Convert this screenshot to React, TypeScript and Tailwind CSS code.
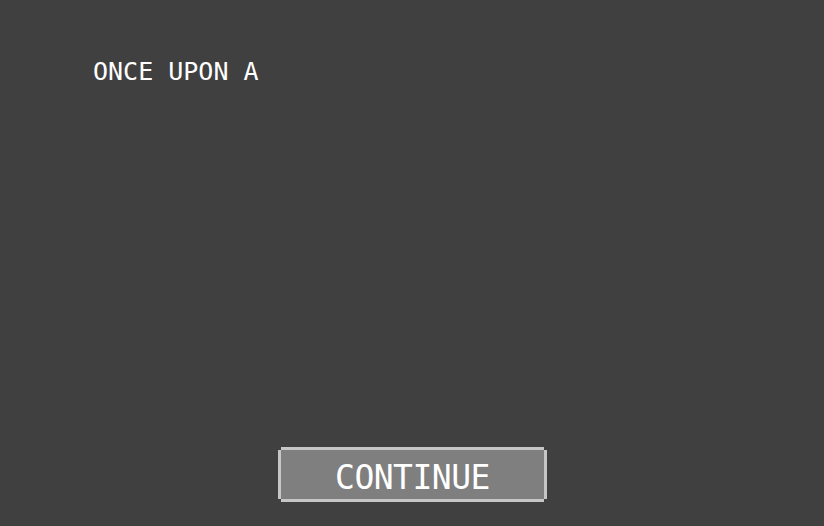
export default function App() {
  return (
    <div className="w-[824px] h-[526px] bg-[#404040] flex flex-col font-['DejaVu_Sans_Mono',monospace] text-white overflow-hidden">
      <p className="pt-[57px] pl-[93px] text-[25px] leading-[30px]">ONCE UPON A</p>
      <div className="flex-1" />
      <div className="flex justify-center pb-[24px] pl-[1px]">
        <button className="relative w-[269px] h-[55px] bg-[#7f7f7f] border-[3px] border-[#c6c6c6] flex items-center justify-center pt-[5px] text-[33px] leading-none tracking-[-0.5px] text-white">
          <span className="absolute -left-[3px] -top-[3px] w-[3px] h-[3px] bg-[#404040]" />
          <span className="absolute -right-[3px] -top-[3px] w-[3px] h-[3px] bg-[#404040]" />
          <span className="absolute -left-[3px] -bottom-[3px] w-[3px] h-[3px] bg-[#404040]" />
          <span className="absolute -right-[3px] -bottom-[3px] w-[3px] h-[3px] bg-[#404040]" />
          CONTINUE
        </button>
      </div>
    </div>
  );
}
